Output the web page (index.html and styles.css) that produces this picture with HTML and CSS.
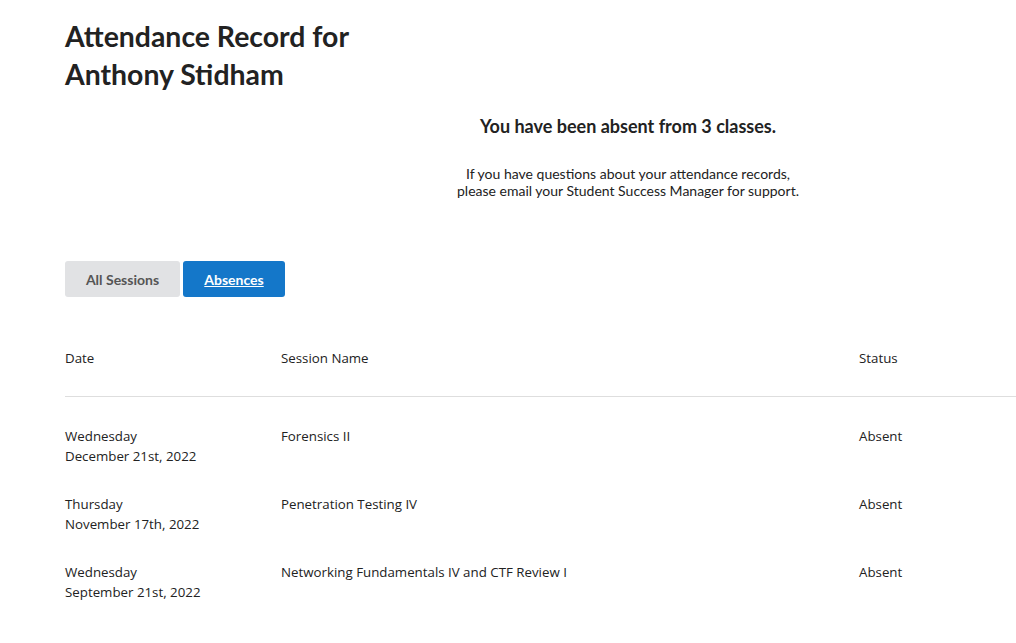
FILE: index.html
```html
<!DOCTYPE html>
<html>
<head>
<meta charset="utf-8">
<link rel="stylesheet" href="styles.css">
</head>
<body>
<main class="page">
  <h1 class="title">Attendance Record for<br>Anthony Stidham</h1>
  <section class="summary">
    <h2 class="summary-head">You have been absent from 3 classes.</h2>
    <p class="summary-note">If you have questions about your attendance records,<br>please email your Student Success Manager for support.</p>
  </section>
  <div class="tabs">
    <button class="tab">All Sessions</button>
    <button class="tab tab-active">Absences</button>
  </div>
  <div class="table">
    <div class="row head">
      <div class="c-date">Date</div>
      <div class="c-name">Session Name</div>
      <div class="c-status">Status</div>
    </div>
    <div class="row">
      <div class="c-date">Wednesday<br>December 21st, 2022</div>
      <div class="c-name">Forensics II</div>
      <div class="c-status">Absent</div>
    </div>
    <div class="row">
      <div class="c-date">Thursday<br>November 17th, 2022</div>
      <div class="c-name">Penetration Testing IV</div>
      <div class="c-status">Absent</div>
    </div>
    <div class="row">
      <div class="c-date">Wednesday<br>September 21st, 2022</div>
      <div class="c-name">Networking Fundamentals IV and CTF Review I</div>
      <div class="c-status">Absent</div>
    </div>
  </div>
</main>
</body>
</html>
```
FILE: styles.css
```css
html, body {
  margin: 0;
  padding: 0;
  background: #fff;
  overflow: hidden;
}
body {
  font-family: Lato, "Open Sans", sans-serif;
  color: #222;
}
.page {
  padding: 17px 0 0 65px;
}
.title {
  margin: 0;
  font-family: Lato, sans-serif;
  font-weight: 700;
  font-size: 28.4px;
  line-height: 38px;
  color: #222;
}
.summary {
  margin: 21px 0 0 240px;
  width: 646px;
  text-align: center;
}
.summary-head {
  margin: 0;
  font-size: 18px;
  font-weight: 700;
  line-height: 24px;
  color: #222;
}
.summary-note {
  margin: 27px 0 0;
  font-size: 14px;
  line-height: 17px;
  color: #222;
}
.tabs {
  display: flex;
  gap: 3px;
  margin-top: 62px;
}
.tab {
  box-sizing: border-box;
  height: 36px;
  border: none;
  border-radius: 3px;
  font-family: Lato, sans-serif;
  font-weight: 700;
  font-size: 14px;
  background: #e1e2e4;
  color: #555;
  padding: 0;
  width: 115px;
  white-space: nowrap;
}
.tab-active {
  background: #1477c9;
  color: #fff;
  text-decoration: underline;
  width: 102px;
}
.table {
  margin-top: 39px;
  font-family: "Open Sans", "Noto Sans", sans-serif;
  font-size: 13.3px;
  line-height: 20px;
  color: #222;
}
.row {
  display: grid;
  grid-template-columns: 216px 578px 1fr;
  padding: 10px 0 18px;
}
.row.head {
  padding: 12px 0 28px;
  border-bottom: 1px solid #dedede;
  margin-bottom: 19px;
}
```
